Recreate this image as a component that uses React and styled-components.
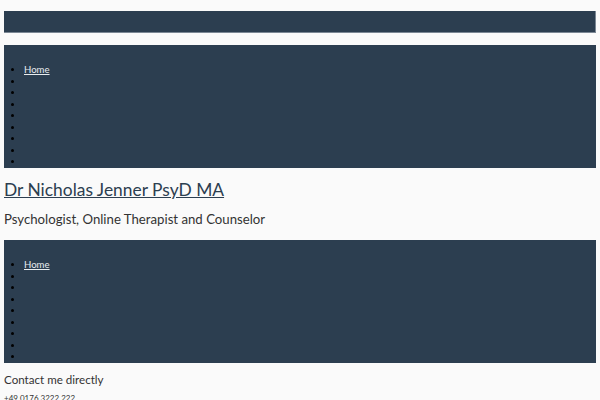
import styled, { createGlobalStyle } from 'styled-components';

const GlobalStyle = createGlobalStyle`
	body {
		margin: 0;
		background: #fafafa;
		font-family: Lato, 'Open Sans', sans-serif;
		color: #333;
	}
`;

const navItems = ['Home', '', '', '', '', '', '', '', ''];

function Menu() {
	return (
		<Nav>
			<MenuList>
				{navItems.map((label, i) => (
					<li key={i}>{label && <a href="#">{label}</a>}</li>
				))}
			</MenuList>
		</Nav>
	);
}

export default function App() {
	return (
		<Page>
			<GlobalStyle />
			<TopBar />
			<Menu />
			<Header>
				<Title>
					<a href="#">Dr Nicholas Jenner PsyD MA</a>
				</Title>
				<Tagline>Psychologist, Online Therapist and Counselor</Tagline>
			</Header>
			<Menu />
			<Contact>Contact me directly</Contact>
			<Phone>+49 0176 3222 222</Phone>
		</Page>
	);
}

const Page = styled.div`
	padding: 11px 4px 0;
	display: flex;
	flex-direction: column;
`;

const TopBar = styled.div`
	height: 21px;
	background: #2c3e50;
	border-right: 1px solid #7b8794;
	border-bottom: 1px solid #7b8794;
	margin-bottom: 12px;
`;

const Nav = styled.nav`
	background: #2c3e50;
	padding-top: 19px;
	height: 104px;
	box-sizing: content-box;
`;

const MenuList = styled.ul`
	margin: 0;
	padding-left: 20px;
	font-size: 9.6px;
	line-height: 11.5px;
	li {
		color: #000;
	}
	a {
		color: #e8ecef;
	}
`;

const Header = styled.header`
	padding: 10px 0 0;
	height: 62px;
`;

const Title = styled.h1`
	margin: 0;
	font-size: 17.4px;
	font-weight: 400;
	line-height: 24px;
	a {
		color: #2c3e50;
	}
`;

const Tagline = styled.p`
	margin: 8px 0 0;
	font-size: 13.2px;
	line-height: 18px;
	color: #333;
`;

const Contact = styled.h3`
	margin: 9px 0 0;
	font-size: 11.6px;
	font-weight: 400;
	line-height: 16px;
	color: #333;
`;

const Phone = styled.p`
	margin: 5px 0 0;
	font-size: 8px;
	line-height: 10px;
	color: #333;
`;
